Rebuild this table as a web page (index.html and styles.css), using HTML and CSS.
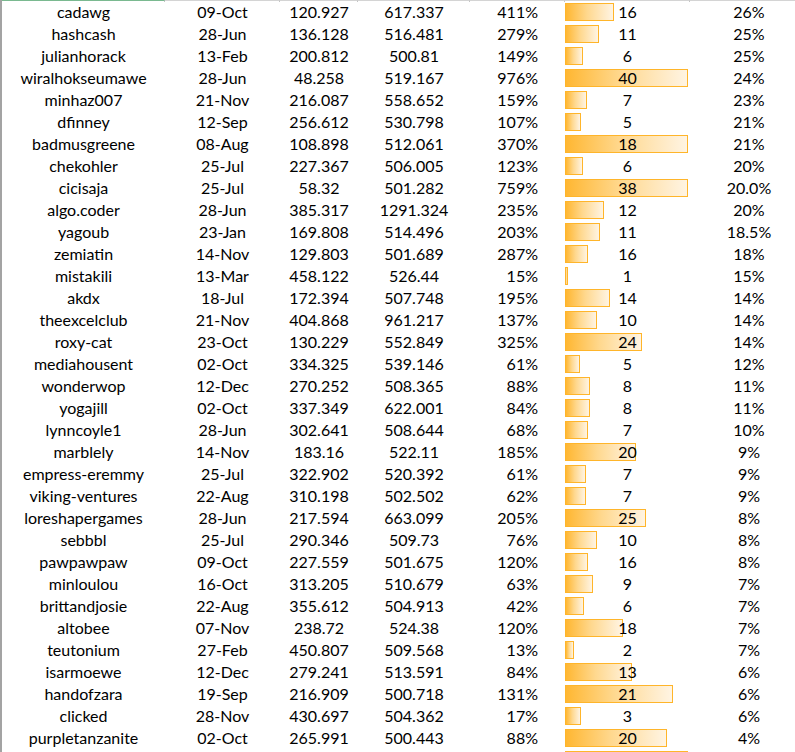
FILE: index.html
```html
<!DOCTYPE html>
<html>
<head>
<meta charset="utf-8">
<link rel="stylesheet" href="styles.css">
</head>
<body>
<div class="sheet">
  <div class="head">
    <span class="hc sel"></span><span class="hc"></span><span class="hc"></span><span class="hc"></span><span class="hc"></span><span class="hc"></span><span class="hc"></span>
  </div>
  <div class="row"><span class="c">cadawg</span><span class="c">09-Oct</span><span class="c">120.927</span><span class="c">617.337</span><span class="c pct">411%</span><span class="c bar"><i class="db" style="width:49px"></i><b>16</b></span><span class="c">26%</span></div>
  <div class="row"><span class="c">hashcash</span><span class="c">28-Jun</span><span class="c">136.128</span><span class="c">516.481</span><span class="c pct">279%</span><span class="c bar"><i class="db" style="width:34px"></i><b>11</b></span><span class="c">25%</span></div>
  <div class="row"><span class="c">julianhorack</span><span class="c">13-Feb</span><span class="c">200.812</span><span class="c">500.81</span><span class="c pct">149%</span><span class="c bar"><i class="db" style="width:18px"></i><b>6</b></span><span class="c">25%</span></div>
  <div class="row"><span class="c">wiralhokseumawe</span><span class="c">28-Jun</span><span class="c">48.258</span><span class="c">519.167</span><span class="c pct">976%</span><span class="c bar"><i class="db" style="width:123px"></i><b>40</b></span><span class="c">24%</span></div>
  <div class="row"><span class="c">minhaz007</span><span class="c">21-Nov</span><span class="c">216.087</span><span class="c">558.652</span><span class="c pct">159%</span><span class="c bar"><i class="db" style="width:22px"></i><b>7</b></span><span class="c">23%</span></div>
  <div class="row"><span class="c">dfinney</span><span class="c">12-Sep</span><span class="c">256.612</span><span class="c">530.798</span><span class="c pct">107%</span><span class="c bar"><i class="db" style="width:16px"></i><b>5</b></span><span class="c">21%</span></div>
  <div class="row"><span class="c">badmusgreene</span><span class="c">08-Aug</span><span class="c">108.898</span><span class="c">512.061</span><span class="c pct">370%</span><span class="c bar"><i class="db" style="width:123px"></i><b>18</b></span><span class="c">21%</span></div>
  <div class="row"><span class="c">chekohler</span><span class="c">25-Jul</span><span class="c">227.367</span><span class="c">506.005</span><span class="c pct">123%</span><span class="c bar"><i class="db" style="width:18px"></i><b>6</b></span><span class="c">20%</span></div>
  <div class="row"><span class="c">cicisaja</span><span class="c">25-Jul</span><span class="c">58.32</span><span class="c">501.282</span><span class="c pct">759%</span><span class="c bar"><i class="db" style="width:123px"></i><b>38</b></span><span class="c">20.0%</span></div>
  <div class="row"><span class="c">algo.coder</span><span class="c">28-Jun</span><span class="c">385.317</span><span class="c">1291.324</span><span class="c pct">235%</span><span class="c bar"><i class="db" style="width:39px"></i><b>12</b></span><span class="c">20%</span></div>
  <div class="row"><span class="c">yagoub</span><span class="c">23-Jan</span><span class="c">169.808</span><span class="c">514.496</span><span class="c pct">203%</span><span class="c bar"><i class="db" style="width:35px"></i><b>11</b></span><span class="c">18.5%</span></div>
  <div class="row"><span class="c">zemiatin</span><span class="c">14-Nov</span><span class="c">129.803</span><span class="c">501.689</span><span class="c pct">287%</span><span class="c bar"><i class="db" style="width:23px"></i><b>16</b></span><span class="c">18%</span></div>
  <div class="row"><span class="c">mistakili</span><span class="c">13-Mar</span><span class="c">458.122</span><span class="c">526.44</span><span class="c pct">15%</span><span class="c bar"><i class="db" style="width:3px"></i><b>1</b></span><span class="c">15%</span></div>
  <div class="row"><span class="c">akdx</span><span class="c">18-Jul</span><span class="c">172.394</span><span class="c">507.748</span><span class="c pct">195%</span><span class="c bar"><i class="db" style="width:45px"></i><b>14</b></span><span class="c">14%</span></div>
  <div class="row"><span class="c">theexcelclub</span><span class="c">21-Nov</span><span class="c">404.868</span><span class="c">961.217</span><span class="c pct">137%</span><span class="c bar"><i class="db" style="width:32px"></i><b>10</b></span><span class="c">14%</span></div>
  <div class="row"><span class="c">roxy-cat</span><span class="c">23-Oct</span><span class="c">130.229</span><span class="c">552.849</span><span class="c pct">325%</span><span class="c bar"><i class="db" style="width:77px"></i><b>24</b></span><span class="c">14%</span></div>
  <div class="row"><span class="c">mediahousent</span><span class="c">02-Oct</span><span class="c">334.325</span><span class="c">539.146</span><span class="c pct">61%</span><span class="c bar"><i class="db" style="width:15px"></i><b>5</b></span><span class="c">12%</span></div>
  <div class="row"><span class="c">wonderwop</span><span class="c">12-Dec</span><span class="c">270.252</span><span class="c">508.365</span><span class="c pct">88%</span><span class="c bar"><i class="db" style="width:25px"></i><b>8</b></span><span class="c">11%</span></div>
  <div class="row"><span class="c">yogajill</span><span class="c">02-Oct</span><span class="c">337.349</span><span class="c">622.001</span><span class="c pct">84%</span><span class="c bar"><i class="db" style="width:25px"></i><b>8</b></span><span class="c">11%</span></div>
  <div class="row"><span class="c">lynncoyle1</span><span class="c">28-Jun</span><span class="c">302.641</span><span class="c">508.644</span><span class="c pct">68%</span><span class="c bar"><i class="db" style="width:23px"></i><b>7</b></span><span class="c">10%</span></div>
  <div class="row"><span class="c">marblely</span><span class="c">14-Nov</span><span class="c">183.16</span><span class="c">522.11</span><span class="c pct">185%</span><span class="c bar"><i class="db" style="width:71px"></i><b>20</b></span><span class="c">9%</span></div>
  <div class="row"><span class="c">empress-eremmy</span><span class="c">25-Jul</span><span class="c">322.902</span><span class="c">520.392</span><span class="c pct">61%</span><span class="c bar"><i class="db" style="width:21px"></i><b>7</b></span><span class="c">9%</span></div>
  <div class="row"><span class="c">viking-ventures</span><span class="c">22-Aug</span><span class="c">310.198</span><span class="c">502.502</span><span class="c pct">62%</span><span class="c bar"><i class="db" style="width:21px"></i><b>7</b></span><span class="c">9%</span></div>
  <div class="row"><span class="c">loreshapergames</span><span class="c">28-Jun</span><span class="c">217.594</span><span class="c">663.099</span><span class="c pct">205%</span><span class="c bar"><i class="db" style="width:81px"></i><b>25</b></span><span class="c">8%</span></div>
  <div class="row"><span class="c">sebbbl</span><span class="c">25-Jul</span><span class="c">290.346</span><span class="c">509.73</span><span class="c pct">76%</span><span class="c bar"><i class="db" style="width:32px"></i><b>10</b></span><span class="c">8%</span></div>
  <div class="row"><span class="c">pawpawpaw</span><span class="c">09-Oct</span><span class="c">227.559</span><span class="c">501.675</span><span class="c pct">120%</span><span class="c bar"><i class="db" style="width:23px"></i><b>16</b></span><span class="c">8%</span></div>
  <div class="row"><span class="c">minloulou</span><span class="c">16-Oct</span><span class="c">313.205</span><span class="c">510.679</span><span class="c pct">63%</span><span class="c bar"><i class="db" style="width:28px"></i><b>9</b></span><span class="c">7%</span></div>
  <div class="row"><span class="c">brittandjosie</span><span class="c">22-Aug</span><span class="c">355.612</span><span class="c">504.913</span><span class="c pct">42%</span><span class="c bar"><i class="db" style="width:19px"></i><b>6</b></span><span class="c">7%</span></div>
  <div class="row"><span class="c">altobee</span><span class="c">07-Nov</span><span class="c">238.72</span><span class="c">524.38</span><span class="c pct">120%</span><span class="c bar"><i class="db" style="width:58px"></i><b>18</b></span><span class="c">7%</span></div>
  <div class="row"><span class="c">teutonium</span><span class="c">27-Feb</span><span class="c">450.807</span><span class="c">509.568</span><span class="c pct">13%</span><span class="c bar"><i class="db" style="width:9px"></i><b>2</b></span><span class="c">7%</span></div>
  <div class="row"><span class="c">isarmoewe</span><span class="c">12-Dec</span><span class="c">279.241</span><span class="c">513.591</span><span class="c pct">84%</span><span class="c bar"><i class="db" style="width:67px"></i><b>13</b></span><span class="c">6%</span></div>
  <div class="row"><span class="c">handofzara</span><span class="c">19-Sep</span><span class="c">216.909</span><span class="c">500.718</span><span class="c pct">131%</span><span class="c bar"><i class="db" style="width:108px"></i><b>21</b></span><span class="c">6%</span></div>
  <div class="row"><span class="c">clicked</span><span class="c">28-Nov</span><span class="c">430.697</span><span class="c">504.362</span><span class="c pct">17%</span><span class="c bar"><i class="db" style="width:16px"></i><b>3</b></span><span class="c">6%</span></div>
  <div class="row"><span class="c">purpletanzanite</span><span class="c">02-Oct</span><span class="c">265.991</span><span class="c">500.443</span><span class="c pct">88%</span><span class="c bar"><i class="db" style="width:102px"></i><b>20</b></span><span class="c">4%</span></div>
  <div class="row"><span class="c"></span><span class="c"></span><span class="c"></span><span class="c"></span><span class="c pct"></span><span class="c bar"><i class="db" style="width:123px"></i></span><span class="c"></span></div>
</div>
</body>
</html>
```

FILE: styles.css
```css
html, body {
  margin: 0;
  padding: 0;
  background: #ffffff;
  overflow: hidden;
}

.sheet {
  width: 808px;
  border-left: 2px solid #a3a3a3;
  font-family: "Lato", "Open Sans", sans-serif;
  font-size: 16px;
  color: #000000;
}

.head,
.row {
  display: grid;
  grid-template-columns: 163px 115px 78px 112px 95px 125px 118px;
}

.head {
  height: 2px;
}

.hc {
  border-top: 1px solid #d4d4d4;
  border-right: 1px solid #c4c4c4;
}

.hc.sel {
  border-top-color: #7ab990;
}

.row {
  height: 22px;
}

.c {
  height: 22px;
  line-height: 20px;
  text-align: center;
  white-space: nowrap;
  overflow: visible;
}

.pct {
  text-align: right;
  padding-right: 27px;
}

.bar {
  position: relative;
}

.db {
  position: absolute;
  left: 0;
  top: 1px;
  height: 18px;
  box-sizing: border-box;
  border: 1px solid #ffb52a;
  background: linear-gradient(to right, #ffb732 0%, #ffd88e 45%, #fff4e3 100%);
}

.bar b {
  position: relative;
  font-weight: normal;
}
```
